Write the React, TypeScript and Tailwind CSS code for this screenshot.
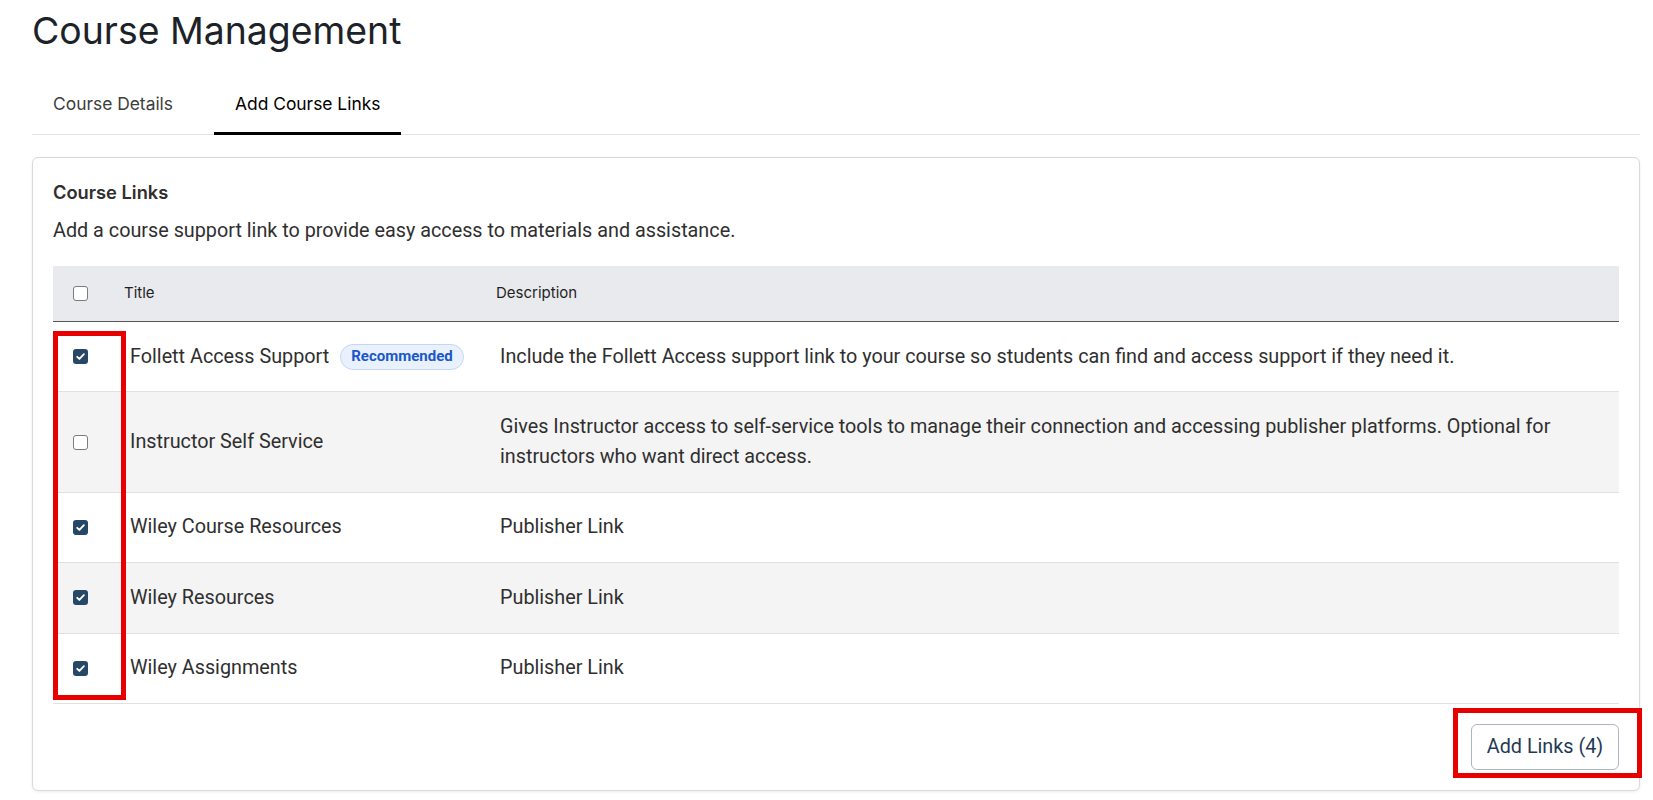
import React from "react";

function Box({ checked }: { checked: boolean }) {
  if (checked) {
    return (
      <div className="flex h-[15px] w-[15px] items-center justify-center rounded-[3px] bg-[#264866]">
        <svg width="11" height="11" viewBox="0 0 12 12" fill="none">
          <path d="M2.4 6.3l2.4 2.4 4.9-5.2" stroke="#ffffff" strokeWidth="2" strokeLinecap="round" strokeLinejoin="round" />
        </svg>
      </div>
    );
  }
  return <div className="h-[15px] w-[15px] rounded-[3px] border border-[#7b7b7b] bg-white" />;
}

const rows = [
  {
    title: "Follett Access Support",
    badge: true,
    desc: "Include the Follett Access support link to your course so students can find and access support if they need it.",
    checked: true,
  },
  {
    title: "Instructor Self Service",
    desc: "Gives Instructor access to self-service tools to manage their connection and accessing publisher platforms. Optional for instructors who want direct access.",
    checked: false,
  },
  { title: "Wiley Course Resources", desc: "Publisher Link", checked: true },
  { title: "Wiley Resources", desc: "Publisher Link", checked: true },
  { title: "Wiley Assignments", desc: "Publisher Link", checked: true },
];

export default function App() {
  return (
    <div className="relative min-h-screen bg-white pl-8 pr-[13px] pt-[8px] font-['Inter',sans-serif]">
      <h1 className="text-[37.4px] leading-[46px] font-normal text-[#1d2228]">Course Management</h1>

      <div className="mt-[22px] flex gap-5 border-b border-[#e3e3e3]">
        <div className="-mb-px border-b-[3px] border-transparent px-[21px] pt-4 pb-4 text-[17.4px] leading-6 text-[#3d3d3d]">
          Course Details
        </div>
        <div className="-mb-px border-b-[3px] border-black px-[21px] pt-4 pb-4 text-[17.4px] leading-6 text-black">
          Add Course Links
        </div>
      </div>

      <div className="mt-[22px] rounded-[6px] border border-[#dadada] bg-white p-5 shadow-[0_1px_3px_rgba(0,0,0,0.08)]">
        <h2 className="text-[18.3px] leading-7 font-semibold text-[#2f2f2f]">Course Links</h2>
        <p className="mt-[11px] font-['Roboto',sans-serif] text-[19.8px] leading-7 text-[#2f2f2f]">
          Add a course support link to provide easy access to materials and assistance.
        </p>

        <div className="mt-[21px]">
          <div className="flex h-[56px] items-center border-b border-[#555555] bg-[#e9eaee] text-[15px] text-[#1f1f1f]">
            <div className="w-[71px] pl-5">
              <Box checked={false} />
            </div>
            <div className="w-[372px]">Title</div>
            <div className="flex-1">Description</div>
          </div>

          {rows.map((r, i) => (
            <div
              key={r.title}
              className={`flex items-center border-b border-[#e0e0e0] py-[19.7px] font-['Roboto',sans-serif] text-[19.8px] leading-[30px] text-[#2f2f2f] ${
                i % 2 === 1 ? "bg-[#f4f4f4]" : "bg-white"
              }`}
            >
              <div className="w-[77px] shrink-0 pl-5">
                <Box checked={r.checked} />
              </div>
              <div className="flex w-[370px] shrink-0 items-center">
                <span>{r.title}</span>
                {r.badge && (
                  <span className="ml-[11px] inline-flex h-[26px] items-center rounded-full border border-[#c3d6f6] bg-[#e9f1fd] px-[10px] text-[15px] leading-none font-bold text-[#1c57c9]">
                    Recommended
                  </span>
                )}
              </div>
              <div className="flex-1 pr-5">{r.desc}</div>
            </div>
          ))}
        </div>

        <div className="mt-5 flex justify-end">
          <button className="h-[46px] w-[148px] rounded-[6px] border border-[#aeb5be] bg-white font-['Roboto',sans-serif] text-[19.8px] text-[#1f3a55]">
            Add Links (4)
          </button>
        </div>
      </div>

      <div className="pointer-events-none absolute left-[53px] top-[331px] h-[369px] w-[73px] border-[5px] border-[#e60000]" />
      <div className="pointer-events-none absolute left-[1453px] top-[708px] h-[70px] w-[189px] border-[5px] border-[#e60000]" />
    </div>
  );
}
